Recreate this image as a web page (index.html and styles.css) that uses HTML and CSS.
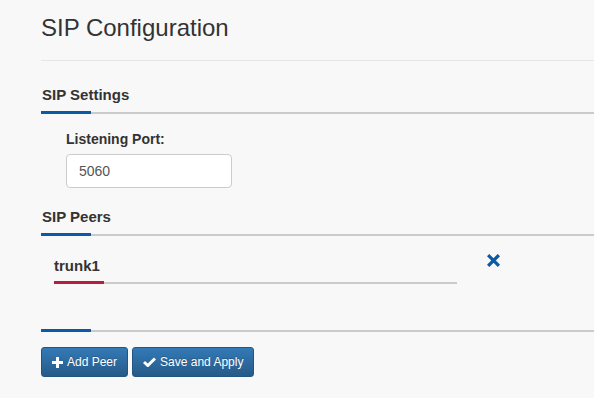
FILE: index.html
```html
<!DOCTYPE html>
<html lang="en">

<head>
    <meta charset="UTF-8">
    <meta name="viewport" content="width=device-width, initial-scale=1.0">
    <title>SIP Configuration</title>
    <link rel="stylesheet" href="styles.css">
</head>

<body>
    <div class="container">
        <div class="page-header">
            <h1>SIP Configuration</h1>
        </div>

        <h3 class="section-title">SIP Settings</h3>
        <div class="rule">
            <span class="rule-accent"></span>
            <span class="rule-line"></span>
        </div>

        <div class="form-group">
            <label for="port">Listening Port:</label>
            <input type="text" id="port" class="form-control" value="5060">
        </div>

        <h3 class="section-title">SIP Peers</h3>
        <div class="rule">
            <span class="rule-accent"></span>
            <span class="rule-line"></span>
        </div>

        <div class="peer-row">
            <div class="peer">
                <div class="peer-name">trunk1</div>
                <div class="rule">
                    <span class="rule-accent red"></span>
                    <span class="rule-line"></span>
                </div>
            </div>
            <a class="remove" href="#" title="Remove">
                <svg width="13" height="13" viewBox="0 0 13 13">
                    <path d="M2.3 2.3 L10.7 10.7 M10.7 2.3 L2.3 10.7" stroke="#0b5aa6" stroke-width="3.3" stroke-linecap="square" fill="none" />
                </svg>
            </a>
        </div>

        <div class="rule bottom-rule">
            <span class="rule-accent"></span>
            <span class="rule-line"></span>
        </div>

        <div class="actions">
            <button class="btn">
                <svg width="11" height="11" viewBox="0 0 11 11">
                    <rect x="4" y="0" width="3" height="11" fill="#fff" />
                    <rect x="0" y="4" width="11" height="3" fill="#fff" />
                </svg>
                Add Peer
            </button>
            <button class="btn">
                <svg width="13" height="10" viewBox="0 0 13 10">
                    <path d="M1 5 L4.8 8.5 L12 1.5" stroke="#fff" stroke-width="3" fill="none" />
                </svg>
                Save and Apply
            </button>
        </div>
    </div>
</body>

</html>
```

FILE: styles.css
```css
body {
    font-family: "Liberation Sans", Arial, sans-serif;
    background-color: #f8f8f8;
    color: #333;
    margin: 0;
}

.container {
    padding-left: 41px;
}

.page-header {
    padding: 14px 0 18px;
    border-bottom: 1px solid #e6e6e6;
}

h1 {
    margin: 0;
    font-size: 24px;
    line-height: 28px;
    font-weight: normal;
}

.section-title {
    margin: 0;
    font-size: 15px;
    line-height: 18px;
    font-weight: bold;
    padding-left: 1px;
}

.page-header + .section-title {
    margin-top: 25px;
}

.rule {
    display: flex;
    align-items: flex-end;
    margin-top: 7px;
}

.rule-accent {
    width: 50px;
    height: 3px;
    background: #0b5aa6;
}

.rule-accent.red {
    background: #b81d41;
}

.rule-line {
    flex: 1;
    height: 2px;
    background: #cacaca;
}

.form-group {
    padding-left: 25px;
    margin-top: 17px;
    margin-bottom: 20px;
}

label {
    display: block;
    font-size: 14px;
    line-height: 16px;
    font-weight: bold;
    margin-bottom: 7px;
}

.form-control {
    display: block;
    box-sizing: border-box;
    width: 166px;
    height: 34px;
    padding: 6px 12px;
    font-family: inherit;
    font-size: 14px;
    line-height: 20px;
    color: #555;
    background: #fff;
    border: 1px solid #ccc;
    border-radius: 4px;
}

.peer-row {
    display: flex;
    align-items: flex-start;
    margin-top: 21px;
    padding-left: 13px;
}

.peer {
    width: 403px;
}

.peer-name {
    font-size: 15px;
    line-height: 18px;
    font-weight: bold;
}

.peer .rule {
    margin-top: 6px;
}

.remove {
    display: block;
    margin-left: 30px;
    margin-top: -3px;
    line-height: 0;
}

.bottom-rule {
    margin-top: 45px;
}

.actions {
    display: flex;
    gap: 4px;
    margin-top: 15px;
}

.btn {
    display: flex;
    align-items: center;
    gap: 4px;
    padding: 5px 10px;
    font-family: inherit;
    font-size: 12px;
    line-height: 18px;
    color: #fff;
    text-shadow: 0 -1px 0 rgba(0, 0, 0, 0.2);
    background: linear-gradient(to bottom, #337ab7 0, #265a88 100%);
    border: 1px solid #245580;
    border-radius: 3px;
    cursor: pointer;
}
```
